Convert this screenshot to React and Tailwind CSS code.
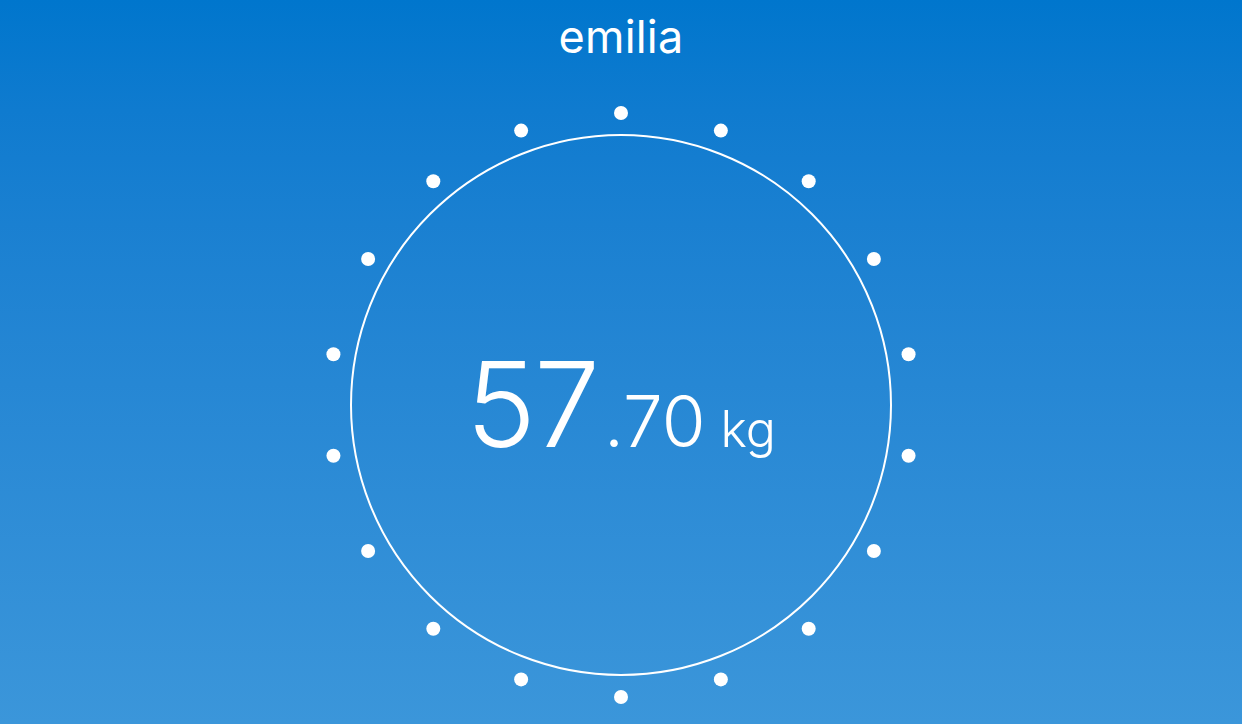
const DOTS = Array.from({ length: 18 }, (_, i) => {
  const a = (i * 20 * Math.PI) / 180
  return { x: 300 + 292 * Math.sin(a), y: 300 - 292 * Math.cos(a) }
})

export default function App() {
  return (
    <div className="w-full h-[724px] overflow-hidden bg-gradient-to-b from-[#0076cd] to-[#3b96da] flex flex-col items-center text-white font-['Inter',sans-serif] select-none">
      <div className="h-[105px] pt-[12px] flex justify-center">
        <h1 className="text-[45px] leading-[50px] font-normal tracking-[0.2px]">emilia</h1>
      </div>

      <div className="relative w-[600px] h-[600px] flex items-center justify-center">
        <svg className="absolute inset-0" width="600" height="600" viewBox="0 0 600 600">
          <circle cx="300" cy="300" r="270" fill="none" stroke="white" strokeWidth="2" />
          {DOTS.map((d, i) => (
            <circle key={i} cx={d.x} cy={d.y} r="7" fill="white" />
          ))}
        </svg>

        <div className="relative flex items-baseline ml-[0px] mb-[2px]">
          <span className="text-[118px] leading-none font-[350] tracking-[-2px]">57</span>
          <span className="text-[71px] leading-none font-[350] ml-[6px]">.70</span>
          <span className="text-[50px] leading-none font-[350] ml-[15px]">kg</span>
        </div>
      </div>
    </div>
  )
}
